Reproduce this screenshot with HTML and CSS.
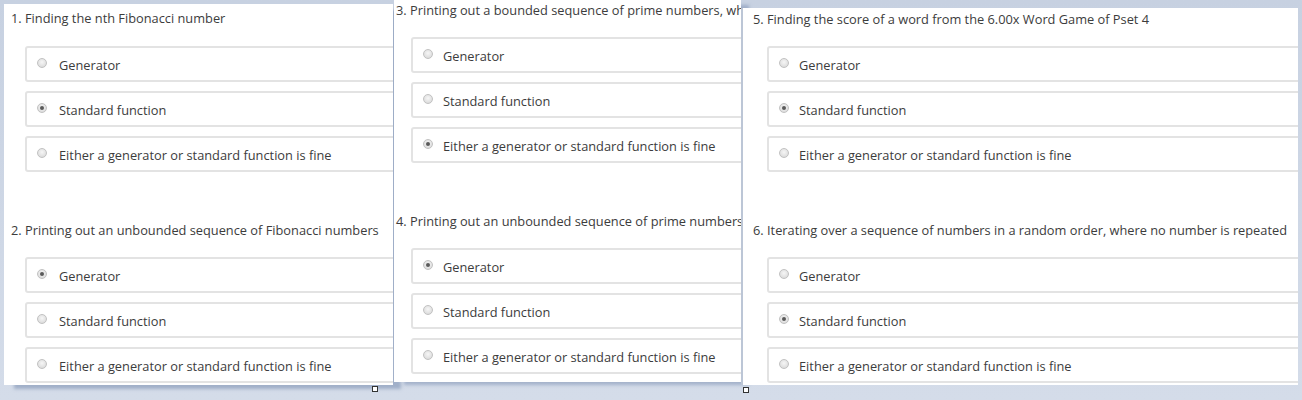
FILE: index.html
```html
<!DOCTYPE html>
<html lang="en">
<head>
<meta charset="utf-8">
<title>Generators vs functions</title>
<link rel="stylesheet" href="styles.css">
</head>
<body>
<div class="desk">
  <section class="shot shot-a">
    <div class="q">
      <p class="q-title">1. Finding the nth Fibonacci number</p>
      <ul class="opts">
        <li class="opt"><span class="radio"></span>Generator</li>
        <li class="opt"><span class="radio on"></span>Standard function</li>
        <li class="opt"><span class="radio"></span>Either a generator or standard function is fine</li>
      </ul>
    </div>
    <div class="q">
      <p class="q-title">2. Printing out an unbounded sequence of Fibonacci numbers</p>
      <ul class="opts">
        <li class="opt"><span class="radio on"></span>Generator</li>
        <li class="opt"><span class="radio"></span>Standard function</li>
        <li class="opt"><span class="radio"></span>Either a generator or standard function is fine</li>
      </ul>
    </div>
  </section>

  <section class="shot shot-b">
    <div class="q">
      <p class="q-title">3. Printing out a bounded sequence of prime numbers, wh</p>
      <ul class="opts">
        <li class="opt"><span class="radio"></span>Generator</li>
        <li class="opt"><span class="radio"></span>Standard function</li>
        <li class="opt"><span class="radio on"></span>Either a generator or standard function is fine</li>
      </ul>
    </div>
    <div class="q">
      <p class="q-title">4. Printing out an unbounded sequence of prime numbers</p>
      <ul class="opts">
        <li class="opt"><span class="radio on"></span>Generator</li>
        <li class="opt"><span class="radio"></span>Standard function</li>
        <li class="opt"><span class="radio"></span>Either a generator or standard function is fine</li>
      </ul>
    </div>
  </section>

  <section class="shot shot-c">
    <div class="q">
      <p class="q-title">5. Finding the score of a word from the 6.00x Word Game of Pset 4</p>
      <ul class="opts">
        <li class="opt"><span class="radio"></span>Generator</li>
        <li class="opt"><span class="radio on"></span>Standard function</li>
        <li class="opt"><span class="radio"></span>Either a generator or standard function is fine</li>
      </ul>
    </div>
    <div class="q">
      <p class="q-title">6. Iterating over a sequence of numbers in a random order, where no number is repeated</p>
      <ul class="opts">
        <li class="opt"><span class="radio"></span>Generator</li>
        <li class="opt"><span class="radio on"></span>Standard function</li>
        <li class="opt"><span class="radio"></span>Either a generator or standard function is fine</li>
      </ul>
    </div>
  </section>

  <span class="handle handle-a"></span>
  <span class="handle handle-b"></span>
</div>
</body>
</html>
```

FILE: styles.css
```css
* { box-sizing: border-box; }

html, body {
  margin: 0;
  padding: 0;
}

body {
  width: 1302px;
  height: 400px;
  overflow: hidden;
  background: linear-gradient(#c7d1e1, #d4dce9);
  font-family: "Open Sans", "Liberation Sans", sans-serif;
  font-size: 12.8px;
  color: #3c3c3c;
}

.desk {
  position: relative;
  width: 1302px;
  height: 400px;
}

.shot {
  position: absolute;
  background: #fff;
  overflow: hidden;
}

.shot-a {
  left: 4px;
  top: 4px;
  width: 389px;
  height: 381px;
  padding: 5px 0 0 7px;
  box-shadow: 9px 5px 3px -1px rgba(120, 140, 175, 0.55);
}

.shot-b {
  left: 394px;
  top: 0;
  width: 347px;
  height: 382px;
  padding: 1px 0 0 2px;
  box-shadow: 9px 4px 3px -1px rgba(120, 140, 175, 0.5);
}

.shot-c {
  left: 741px;
  top: 8px;
  width: 557px;
  height: 377px;
  padding: 2px 0 0 10px;
  border-left: 2px solid #bcc6d6;
}

.q + .q { margin-top: 49px; }

.q-title {
  margin: 0;
  line-height: 18px;
  white-space: nowrap;
}

.opts {
  list-style: none;
  margin: 19px 0 0 14px;
  padding: 0;
  width: 700px;
  display: flex;
  flex-direction: column;
  gap: 9px;
}

.shot-a .q + .q .opts { margin-top: 18px; }
.shot-b .opts { margin: 18px 0 0 15px; }
.shot-c .opts { margin-top: 18px; }

.opt {
  height: 36px;
  border: 2px solid #e3e3e3;
  border-radius: 3px;
  display: flex;
  align-items: center;
  padding: 1px 0 0 10px;
  white-space: nowrap;
}

.radio {
  width: 10px;
  height: 10px;
  border-radius: 50%;
  border: 1px solid #c2c2c2;
  background: radial-gradient(circle at 50% 40%, #f6f6f6 0, #e2e2e2 60%, #d2d2d2 100%);
  margin-right: 12px;
  flex: none;
  display: flex;
  align-items: center;
  justify-content: center;
  position: relative;
  top: -2px;
}

.shot-b .radio,
.shot-c .radio { margin-right: 10px; }

.radio.on::after {
  content: "";
  width: 4px;
  height: 4px;
  border-radius: 50%;
  background: #5a5a5a;
}

.handle {
  position: absolute;
  width: 6px;
  height: 6px;
  border: 1px solid #333;
  background: #fff;
}

.handle-a { left: 372px; top: 386px; }
.handle-b { left: 743px; top: 387px; }
```
